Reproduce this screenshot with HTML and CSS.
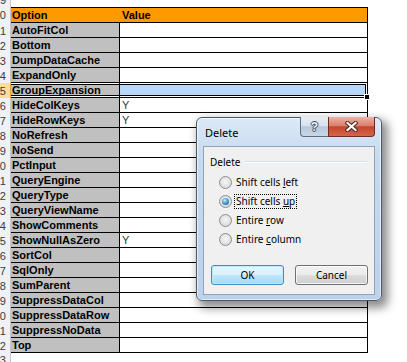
FILE: index.html
```html
<!DOCTYPE html>
<html lang="en">
<head>
  <meta charset="UTF-8">
  <title>Options - Delete</title>
  <link rel="stylesheet" href="styles.css">
</head>
<body>
  <div class="sheet">
    <div class="row edge top"><div class="num"><span>9</span></div></div>
    <div class="row head"><div class="num"><span>10</span></div><div class="cell opt">Option</div><div class="cell val">Value</div></div>
    <div class="row"><div class="num"><span>11</span></div><div class="cell opt">AutoFitCol</div><div class="cell val"></div></div>
    <div class="row"><div class="num"><span>12</span></div><div class="cell opt">Bottom</div><div class="cell val"></div></div>
    <div class="row"><div class="num"><span>13</span></div><div class="cell opt">DumpDataCache</div><div class="cell val"></div></div>
    <div class="row"><div class="num"><span>14</span></div><div class="cell opt">ExpandOnly</div><div class="cell val"></div></div>
    <div class="row active"><div class="num"><span>15</span></div><div class="cell opt">GroupExpansion</div><div class="cell val"><span class="handle"></span></div></div>
    <div class="row"><div class="num"><span>16</span></div><div class="cell opt">HideColKeys</div><div class="cell val">Y</div></div>
    <div class="row"><div class="num"><span>17</span></div><div class="cell opt">HideRowKeys</div><div class="cell val">Y</div></div>
    <div class="row"><div class="num"><span>18</span></div><div class="cell opt">NoRefresh</div><div class="cell val"></div></div>
    <div class="row"><div class="num"><span>19</span></div><div class="cell opt">NoSend</div><div class="cell val"></div></div>
    <div class="row"><div class="num"><span>20</span></div><div class="cell opt">PctInput</div><div class="cell val"></div></div>
    <div class="row"><div class="num"><span>21</span></div><div class="cell opt">QueryEngine</div><div class="cell val"></div></div>
    <div class="row"><div class="num"><span>22</span></div><div class="cell opt">QueryType</div><div class="cell val"></div></div>
    <div class="row"><div class="num"><span>23</span></div><div class="cell opt">QueryViewName</div><div class="cell val"></div></div>
    <div class="row"><div class="num"><span>24</span></div><div class="cell opt">ShowComments</div><div class="cell val"></div></div>
    <div class="row"><div class="num"><span>25</span></div><div class="cell opt">ShowNullAsZero</div><div class="cell val">Y</div></div>
    <div class="row"><div class="num"><span>26</span></div><div class="cell opt">SortCol</div><div class="cell val"></div></div>
    <div class="row"><div class="num"><span>27</span></div><div class="cell opt">SqlOnly</div><div class="cell val"></div></div>
    <div class="row"><div class="num"><span>28</span></div><div class="cell opt">SumParent</div><div class="cell val"></div></div>
    <div class="row"><div class="num"><span>29</span></div><div class="cell opt">SuppressDataCol</div><div class="cell val"></div></div>
    <div class="row"><div class="num"><span>30</span></div><div class="cell opt">SuppressDataRow</div><div class="cell val"></div></div>
    <div class="row"><div class="num"><span>31</span></div><div class="cell opt">SuppressNoData</div><div class="cell val"></div></div>
    <div class="row"><div class="num"><span>32</span></div><div class="cell opt">Top</div><div class="cell val"></div></div>
    <div class="row edge bottom"><div class="num"><span>33</span></div></div>
  </div>

  <div class="dialog">
    <div class="titlebar">
      <span class="title">Delete</span>
      <div class="caption">
        <span class="help">?</span>
        <span class="close">
          <svg width="13" height="11" viewBox="0 0 13 11">
            <path d="M2.5 2 L10.5 9 M10.5 2 L2.5 9" stroke="#4a2620" stroke-width="4.2" stroke-linecap="square" fill="none"/>
            <path d="M2.5 2 L10.5 9 M10.5 2 L2.5 9" stroke="#fff" stroke-width="2.2" stroke-linecap="square" fill="none"/>
          </svg>
        </span>
      </div>
    </div>
    <div class="client">
      <div class="group"><span>Delete</span></div>
      <div class="options">
        <div class="radio"><span class="dot"></span><span class="text">Shift cells <u>l</u>eft</span></div>
        <div class="radio"><span class="dot on"></span><span class="text focus">Shift cells <u>u</u>p</span></div>
        <div class="radio"><span class="dot"></span><span class="text">Entire <u>r</u>ow</span></div>
        <div class="radio"><span class="dot"></span><span class="text">Entire <u>c</u>olumn</span></div>
      </div>
      <div class="buttons">
        <button class="btn default">OK</button>
        <button class="btn">Cancel</button>
      </div>
    </div>
  </div>
</body>
</html>
```

FILE: styles.css
```css
body {
  margin: 0;
  width: 407px;
  height: 362px;
  overflow: hidden;
  position: relative;
  background: #fff;
  font-family: "Liberation Sans", Arial, sans-serif;
  color: #000;
}
.row {
  display: flex;
  height: 15px;
}
.row.head {
  height: 16px;
}
.row.edge.top {
  height: 7px;
}
.row.edge.bottom {
  height: 10px;
}
.num {
  width: 11px;
  flex: none;
  box-sizing: border-box;
  border-right: 1px solid #c6c6c6;
  background: #eff1f4;
  padding-right: 4px;
  display: flex;
  justify-content: flex-end;
  align-items: center;
  overflow: hidden;
  font-size: 11px;
  line-height: 14px;
  color: #3b3b3b;
}
.num span {
  flex: none;
}
.edge.top .num {
  align-items: flex-end;
}
.edge.bottom .num {
  align-items: flex-start;
}
.active .num {
  background: #f9dc9e;
  border-right-color: #e6a33c;
}
.cell {
  box-sizing: border-box;
  border-bottom: 1px solid #000;
  font-size: 11px;
  line-height: 14px;
  white-space: nowrap;
  overflow: hidden;
}
.opt {
  width: 109px;
  background: #c0c0c0;
  border-right: 1px solid #000;
  font-weight: bold;
  padding-left: 1px;
}
.val {
  width: 248px;
  border-right: 1px solid #000;
  padding-left: 2px;
  color: #3a3a3a;
  position: relative;
  overflow: visible;
}
.head .cell {
  background: #ff9900;
  border-top: 1px solid #000;
  color: #000;
  font-weight: bold;
}
.head .opt {
  border-right: 0;
}
.active .opt {
  box-shadow: inset 0 1px 0 #fff, inset 0 -1px 0 #fff, inset 0 2px 0 #000, inset 0 -2px 0 #000;
}
.active .val {
  background: #b9d7fb;
  box-shadow: inset 0 1px 0 #fff, inset 0 -1px 0 #fff, inset -1px 0 0 #fff,
    inset 0 2px 0 #000, inset 0 -2px 0 #000, inset -2px 0 0 #000;
}
.handle {
  position: absolute;
  right: -3px;
  bottom: -3px;
  width: 4px;
  height: 4px;
  background: #000;
  border: 1px solid #fff;
  z-index: 1;
}

/* delete dialog */
.dialog {
  position: absolute;
  left: 196px;
  top: 117px;
  width: 186px;
  height: 184px;
  box-sizing: border-box;
  border: 1px solid #4a5a6e;
  border-radius: 6px;
  padding: 0 6px 6px;
  background: linear-gradient(#dce9f7, #c7daef 40px, #bcd2eb);
  box-shadow: inset 0 0 0 1px rgba(255,255,255,0.6), 4px 5px 10px 2px rgba(0,0,0,0.45);
  font-family: "Noto Sans", "Open Sans", sans-serif;
  font-size: 10px;
  color: #000;
  z-index: 5;
}
.titlebar {
  height: 28px;
  display: flex;
  align-items: center;
  padding-left: 2px;
}
.title {
  font-size: 11px;
}
.caption {
  position: absolute;
  top: -1px;
  right: 6px;
  display: flex;
}
.help {
  width: 28px;
  height: 20px;
  box-sizing: border-box;
  border: 1px solid #5d6e83;
  border-top: 0;
  border-right: 0;
  border-radius: 0 0 0 4px;
  background: linear-gradient(#e8eff7, #d6e2ee 45%, #b6c8dc 52%, #c9d8e8);
  display: flex;
  align-items: center;
  justify-content: center;
  font: bold 12px "Liberation Sans", Arial, sans-serif;
  color: #f4f6f8;
  text-shadow: 1px 0 0 #3c4756, -1px 0 0 #3c4756, 0 1px 0 #3c4756, 0 -1px 0 #3c4756;
}
.close {
  width: 47px;
  height: 20px;
  box-sizing: border-box;
  border: 1px solid #6e2a20;
  border-top: 0;
  border-radius: 0 0 4px 0;
  background: linear-gradient(#ebb3a6, #da806c 45%, #c7452b 52%, #d3664c);
  display: flex;
  align-items: center;
  justify-content: center;
}
.client {
  height: 149px;
  box-sizing: border-box;
  border: 1px solid #8ea3bc;
  background: #f0f0f0;
}
.group {
  display: flex;
  align-items: center;
  gap: 5px;
  margin: 8px 7px 0 6px;
  line-height: 14px;
}
.group::after {
  content: "";
  flex: 1;
  height: 1px;
  background: #d5dfe5;
  border-bottom: 1px solid #fff;
}
.options {
  margin-top: 4px;
  padding-left: 15px;
}
.radio {
  display: flex;
  align-items: center;
  height: 19px;
  gap: 2px;
}
.dot {
  width: 13px;
  height: 13px;
  box-sizing: border-box;
  border-radius: 50%;
  border: 1px solid #8c8e90;
  background: radial-gradient(circle at 50% 45%, #f6f6f6 0, #e6e6e6 45%, #cfd0d1 100%);
  position: relative;
}
.dot.on::after {
  content: "";
  position: absolute;
  left: 2px;
  top: 2px;
  width: 7px;
  height: 7px;
  border-radius: 50%;
  background: radial-gradient(circle at 40% 35%, #c2effd 0, #3a9ad8 50%, #14548c 100%);
}
.text {
  border: 1px dotted transparent;
  padding: 0 1px;
  line-height: 13px;
}
.text.focus {
  border-color: #000;
}
.buttons {
  display: flex;
  gap: 11px;
  margin-top: 16px;
  padding-left: 7px;
}
.btn {
  width: 73px;
  height: 20px;
  box-sizing: border-box;
  border: 1px solid #707070;
  border-radius: 3px;
  padding: 0;
  background: linear-gradient(#f2f2f2, #ebebeb 50%, #dddddd 50%, #cfcfcf);
  box-shadow: inset 0 0 0 1px rgba(255,255,255,0.75);
  font-family: "Noto Sans", "Open Sans", sans-serif;
  font-size: 10px;
  color: #000;
}
.btn.default {
  border-color: #3c8fc4;
  background: linear-gradient(#eaf6fd, #d9f0fc 50%, #bee6fd 50%, #a9dbf6);
  box-shadow: inset 0 0 0 1px #bfe8fb;
}
```
